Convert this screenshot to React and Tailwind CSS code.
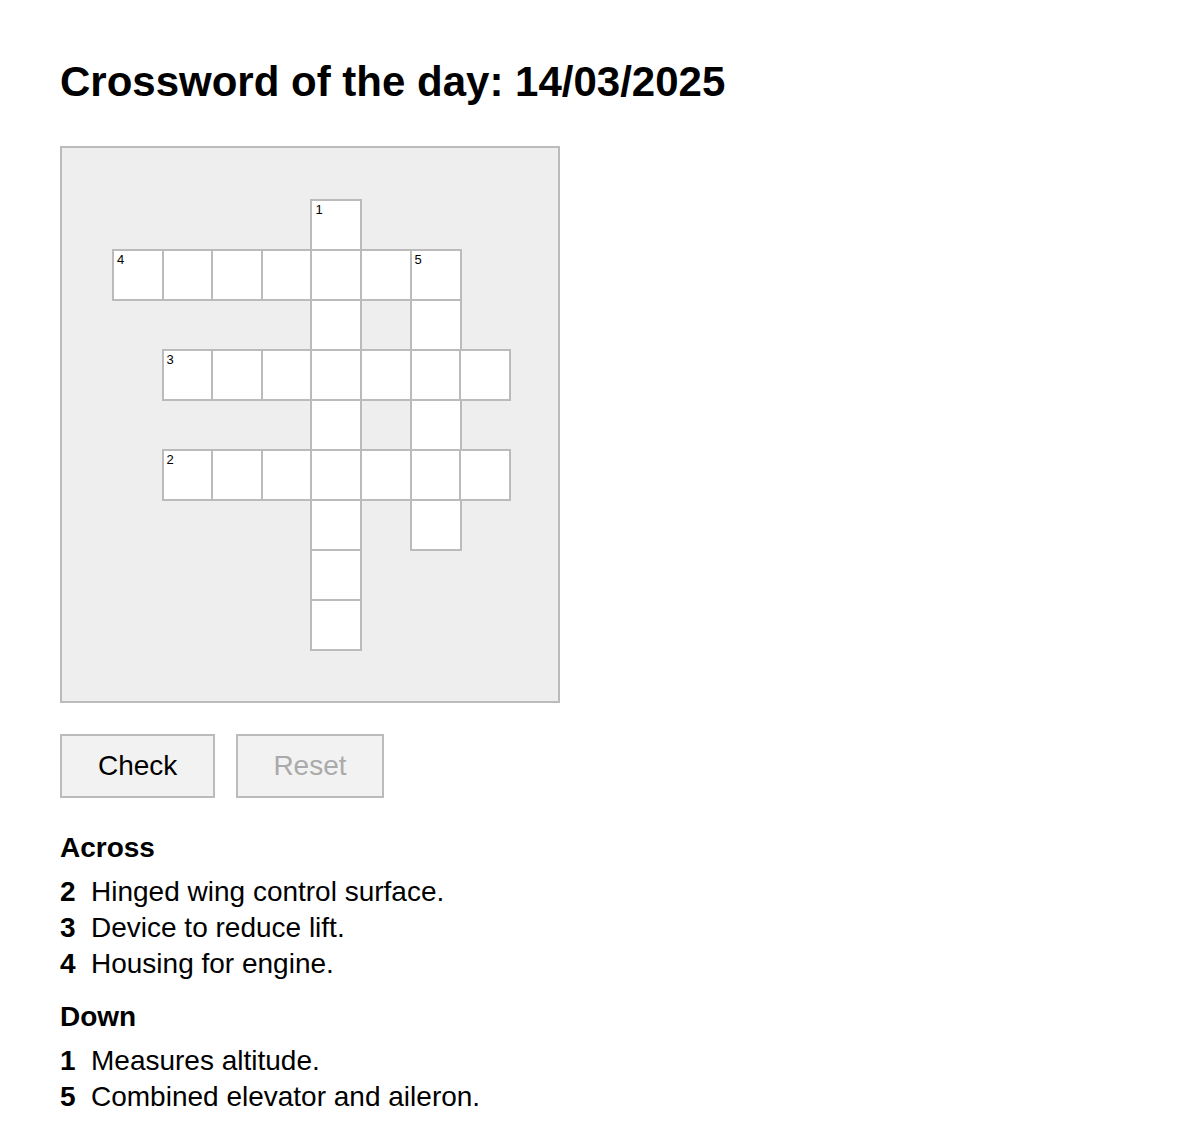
import React, { useState } from 'react';

const cells = [
  { r: 0, c: 4, n: 1 },
  ...[0, 1, 2, 3, 4, 5, 6].map(c => ({ r: 1, c, n: c === 0 ? 4 : c === 6 ? 5 : null })),
  { r: 2, c: 4 }, { r: 2, c: 6 },
  ...[1, 2, 3, 4, 5, 6, 7].map(c => ({ r: 3, c, n: c === 1 ? 3 : null })),
  { r: 4, c: 4 }, { r: 4, c: 6 },
  ...[1, 2, 3, 4, 5, 6, 7].map(c => ({ r: 5, c, n: c === 1 ? 2 : null })),
  { r: 6, c: 4 }, { r: 6, c: 6 },
  { r: 7, c: 4 },
  { r: 8, c: 4 },
]

const across = [
  [2, 'Hinged wing control surface.'],
  [3, 'Device to reduce lift.'],
  [4, 'Housing for engine.'],
]

const down = [
  [1, 'Measures altitude.'],
  [5, 'Combined elevator and aileron.'],
]

const Cell = ({ cell, value, onChange }) => {
  return (
    <div
      className="relative w-[52px] h-[52px] border-2 border-[#bbb] bg-white"
      style={{ gridRow: cell.r + 1, gridColumn: cell.c + 1 }}
    >
      {cell.n && <span className="absolute top-[2px] left-[3px] text-[13px] leading-[14px]">{cell.n}</span>}
      <input
        className="w-full h-full bg-transparent text-center text-[24px] uppercase outline-none"
        maxLength={1}
        value={value || ''}
        onChange={e => onChange(e.target.value)}
      />
    </div>
  )
}

const Clues = ({ title, items, className }) => (
  <section className={className}>
    <h2 className="text-[28px] leading-[32px] font-bold">{title}</h2>
    <ul className="mt-[10px]">
      {items.map(([n, text]) => (
        <li key={n} className="flex text-[28px] leading-[36px]">
          <b className="w-[31px] shrink-0">{n}</b>
          <span>{text}</span>
        </li>
      ))}
    </ul>
  </section>
)

export default function App() {
  const [answers, setAnswers] = useState({})
  const filled = Object.values(answers).some(v => v)

  return (
    <div className="px-[60px] pt-[57px] pb-10 text-black font-['Liberation_Sans',Arial,sans-serif]">
      <h1 className="text-[42px] leading-[50px] font-bold">Crossword of the day: 14/03/2025</h1>

      <div className="mt-[39px] w-[500px] border-2 border-[#bbb] bg-[#eee] pt-[51px] pb-[50px] pl-[50px]">
        <div className="grid grid-cols-[repeat(8,49.6px)] grid-rows-[repeat(9,50px)] w-[399px] h-[452px]">
          {cells.map(cell => {
            const key = `${cell.r}-${cell.c}`
            return (
              <Cell
                key={key}
                cell={cell}
                value={answers[key]}
                onChange={v => setAnswers({ ...answers, [key]: v })}
              />
            )
          })}
        </div>
      </div>

      <div className="mt-[31px] flex gap-[21px]">
        <button className="h-[64px] px-[36px] border-2 border-[#bbb] bg-[#f2f2f2] text-[28px]">Check</button>
        <button
          className="h-[64px] px-[35px] border-2 border-[#bbb] bg-[#f2f2f2] text-[28px] text-[#aaa]"
          disabled={!filled}
          onClick={() => setAnswers({})}
        >
          Reset
        </button>
      </div>

      <Clues title="Across" items={across} className="mt-[34px]" />
      <Clues title="Down" items={down} className="mt-[19px]" />
    </div>
  );
}
